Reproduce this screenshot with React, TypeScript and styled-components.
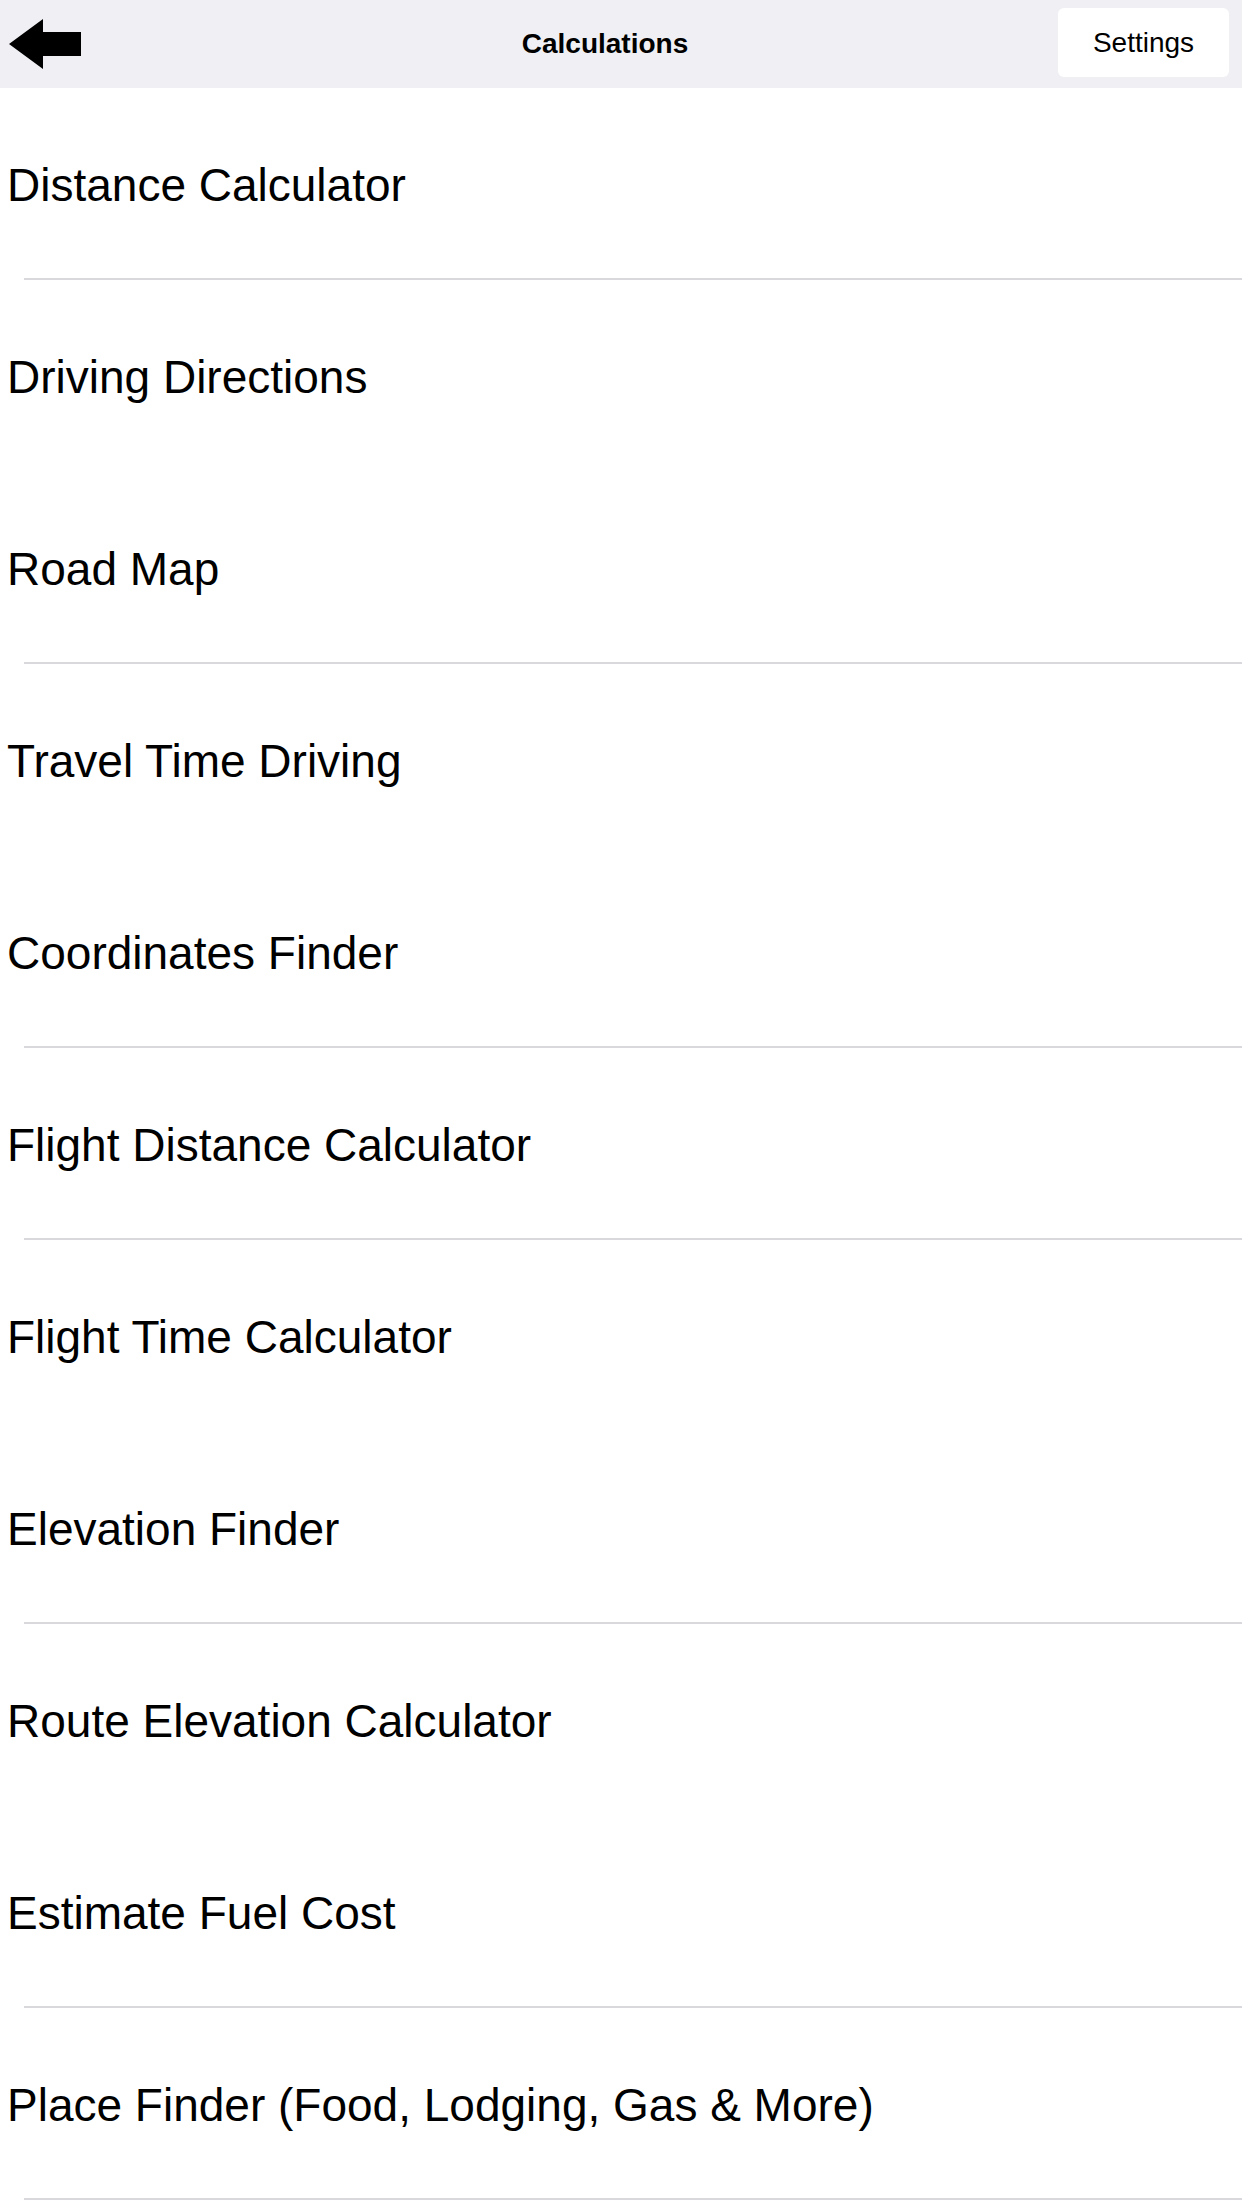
import React from "react";
import styled, { createGlobalStyle } from "styled-components";

const GlobalStyle = createGlobalStyle`
  html, body {
    margin: 0;
    padding: 0;
    background: #ffffff;
  }
  body {
    font-family: "Liberation Sans", Arial, sans-serif;
    color: #000000;
  }
`;

const Page = styled.div`
  width: 1242px;
  min-height: 2208px;
  background: #ffffff;
  display: flex;
  flex-direction: column;
`;

const NavBar = styled.header`
  height: 88px;
  background: #efeff4;
  display: grid;
  grid-template-columns: 152px 1fr 184px;
  align-items: center;
`;

const BackButton = styled.button`
  justify-self: start;
  margin: 0 0 0 9px;
  padding: 0;
  border: 0;
  background: transparent;
  display: flex;
  align-items: center;
  cursor: pointer;
`;

const Title = styled.h1`
  margin: 0;
  text-align: center;
  font-size: 28px;
  font-weight: 700;
  line-height: 1;
  color: #000000;
`;

const SettingsButton = styled.button`
  justify-self: start;
  align-self: start;
  margin-top: 8px;
  width: 171px;
  height: 69px;
  border: 0;
  border-radius: 6px;
  background: #ffffff;
  font-family: "Liberation Sans", Arial, sans-serif;
  font-size: 28px;
  color: #000000;
  padding: 0;
  cursor: pointer;
`;

const List = styled.ul`
  list-style: none;
  margin: 0;
  padding: 0;
  display: flex;
  flex-direction: column;
`;

const Row = styled.li<{ $divider: boolean }>`
  height: 192px;
  display: flex;
  flex-direction: column;

  &::after {
    content: "";
    height: 2px;
    margin-left: 24px;
    background: ${(p) => (p.$divider ? "#d9d9dd" : "transparent")};
  }
`;

const Label = styled.span`
  flex: 1;
  display: flex;
  align-items: center;
  padding: 4px 0 0 7px;
  font-size: 46px;
  line-height: 1;
  color: #000000;
`;

const items: { label: string; divider: boolean }[] = [
  { label: "Distance Calculator", divider: true },
  { label: "Driving Directions", divider: false },
  { label: "Road Map", divider: true },
  { label: "Travel Time Driving", divider: false },
  { label: "Coordinates Finder", divider: true },
  { label: "Flight Distance Calculator", divider: true },
  { label: "Flight Time Calculator", divider: false },
  { label: "Elevation Finder", divider: true },
  { label: "Route Elevation Calculator", divider: false },
  { label: "Estimate Fuel Cost", divider: true },
  { label: "Place Finder (Food, Lodging, Gas & More)", divider: true },
];

const BackArrow = () => (
  <svg width="72" height="50" viewBox="0 0 72 50" aria-hidden="true">
    <polygon
      points="0,25 34,0 34,13 72,13 72,37 34,37 34,50"
      fill="#000000"
    />
  </svg>
);

export default function App() {
  return (
    <Page>
      <GlobalStyle />
      <NavBar>
        <BackButton aria-label="Back">
          <BackArrow />
        </BackButton>
        <Title>Calculations</Title>
        <SettingsButton>Settings</SettingsButton>
      </NavBar>
      <List>
        {items.map((item) => (
          <Row key={item.label} $divider={item.divider}>
            <Label>{item.label}</Label>
          </Row>
        ))}
      </List>
    </Page>
  );
}
